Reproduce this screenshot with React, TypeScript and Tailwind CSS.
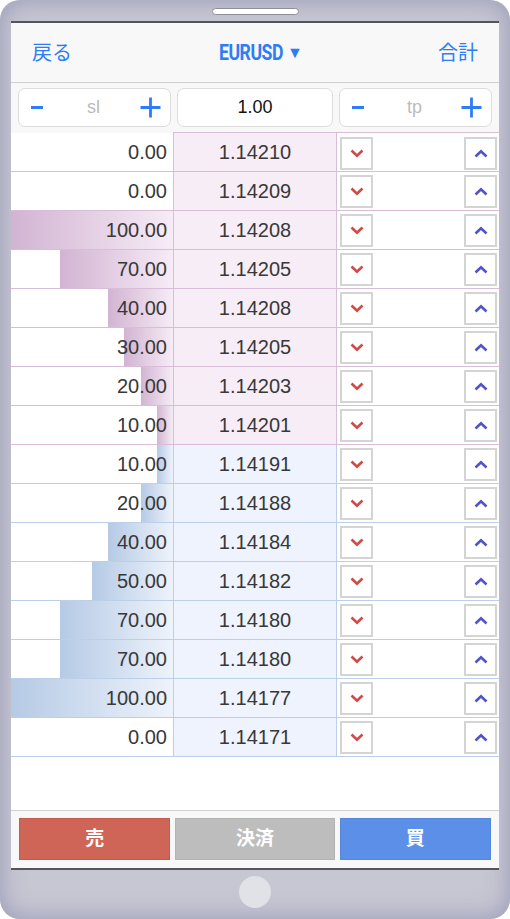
import React from "react";

// Order-book ladder for one currency pair, shown inside a phone frame.

type Row = { vol: number; price: string };

const asks: Row[] = [
  { vol: 0, price: "1.14210" },
  { vol: 0, price: "1.14209" },
  { vol: 100, price: "1.14208" },
  { vol: 70, price: "1.14205" },
  { vol: 40, price: "1.14208" },
  { vol: 30, price: "1.14205" },
  { vol: 20, price: "1.14203" },
  { vol: 10, price: "1.14201" },
];

const bids: Row[] = [
  { vol: 10, price: "1.14191" },
  { vol: 20, price: "1.14188" },
  { vol: 40, price: "1.14184" },
  { vol: 50, price: "1.14182" },
  { vol: 70, price: "1.14180" },
  { vol: 70, price: "1.14180" },
  { vol: 100, price: "1.14177" },
  { vol: 0, price: "1.14171" },
];

const sans = "font-['Liberation_Sans','Noto_Sans_CJK_JP',sans-serif]";

const ChevronDown = () => (
  <svg width="14" height="9" viewBox="0 0 14 9">
    <polyline points="1.5,1.5 7,6.8 12.5,1.5" fill="none" stroke="#d24a48" strokeWidth="2.6" />
  </svg>
);

const ChevronUp = () => (
  <svg width="14" height="9" viewBox="0 0 14 9">
    <polyline points="1.5,7.5 7,2.2 12.5,7.5" fill="none" stroke="#4f54c8" strokeWidth="2.6" />
  </svg>
);

const LadderRow = ({ row, side, first }: { row: Row; side: "ask" | "bid"; first?: boolean }) => {
  const isAsk = side === "ask";
  const line = isAsk ? "border-[#d8bcd8]" : "border-[#bccfe8]";
  return (
    <div className={`flex h-[39px] border-b ${line}`}>
      {/* volume with depth bar */}
      <div className="relative w-[162px] flex items-center justify-end pr-[6px] bg-white">
        {row.vol > 0 && (
          <div
            className={`absolute right-0 top-0 bottom-0 ${
              isAsk
                ? "bg-gradient-to-r from-[#d2b4d2] to-[#f6ecf6]"
                : "bg-gradient-to-r from-[#b5cae5] to-[#eef3fb]"
            }`}
            style={{ width: `${row.vol}%` }}
          />
        )}
        <span className="relative text-[20px] text-[#383838]">{row.vol.toFixed(2)}</span>
      </div>
      {/* price */}
      <div
        className={`w-[164px] flex items-center justify-center border-x ${line} ${first ? "border-t -mt-px" : ""} ${
          isAsk ? "bg-[#f7edf7]" : "bg-[#eef3fd]"
        }`}
      >
        <span className="text-[20px] text-[#383838]">{row.price}</span>
      </div>
      {/* step buttons */}
      <div className={`flex-1 flex items-start justify-between pt-[3px] pl-[3px] pr-[2px] bg-white ${first ? `border-t ${line} -mt-px pt-[4px]` : ""}`}>
        <button className="w-[33px] h-[33px] border-2 border-[#d4d4d4] bg-white flex items-center justify-center">
          <ChevronDown />
        </button>
        <button className="w-[33px] h-[33px] border-2 border-[#d4d4d4] bg-white flex items-center justify-center">
          <ChevronUp />
        </button>
      </div>
    </div>
  );
};

const Stepper = ({ label, width }: { label: string; width: string }) => (
  <div className={`${width} h-[39px] rounded-[7px] border border-[#dcdcdc] bg-white flex items-center justify-between pl-[12px] pr-[9px]`}>
    <span className="w-[12px] h-[3px] bg-[#2e7cf6]" />
    <span className="text-[#bbbbbb] text-[18px] pl-[4px]">{label}</span>
    <svg width="21" height="21" viewBox="0 0 21 21">
      <path d="M10.5 0.5v20M0.5 10.5h20" stroke="#2e7cf6" strokeWidth="2.8" />
    </svg>
  </div>
);

export default function App() {
  return (
    <div
      className={`${sans} w-[510px] h-[919px] rounded-[20px] bg-[#c7c7d3] shadow-[inset_0_0_26px_rgba(150,150,180,0.95)] flex flex-col overflow-hidden`}
    >
      {/* top bezel with speaker */}
      <div className="h-[21px] flex justify-center pt-[8px]">
        <div className="w-[87px] h-[7px] rounded-full bg-white border border-[#8f8f9c]" />
      </div>

      {/* screen */}
      <div className="mx-[11px] border-y-2 border-[#555] bg-white flex flex-col">
        <header className="h-[60px] bg-[#f8f8f8] border-b border-[#cfcfcf] flex items-center justify-between pl-[21px] pr-[21px]">
          <span className="text-[#2e7cf6] text-[20px]">戻る</span>
          <span className="flex items-center text-[#2e7cf6] ml-[4px]">
            <span className="font-['Roboto',sans-serif] font-bold text-[22px] tracking-tight scale-x-80 inline-block">EURUSD</span>
            <span className="text-[16px] -ml-[4px]">▼</span>
          </span>
          <span className="text-[#2e7cf6] text-[20px]">合計</span>
        </header>

        <div className="h-[50px] bg-[#f8f8f8] flex items-start gap-[6px] px-[7px] pt-[5px]">
          <Stepper label="sl" width="w-[153px]" />
          <div className="w-[156px] h-[39px] rounded-[7px] border border-[#dcdcdc] bg-white flex items-center justify-center text-[18px] text-[#111]">
            1.00
          </div>
          <Stepper label="tp" width="w-[153px]" />
        </div>

        <div className="flex flex-col">
          {asks.map((r, i) => (
            <LadderRow key={`a${i}`} row={r} side="ask" first={i === 0} />
          ))}
          {bids.map((r, i) => (
            <LadderRow key={`b${i}`} row={r} side="bid" />
          ))}
        </div>

        <div className="h-[53px] bg-white" />

        <div className="h-[58px] bg-[#f8f8f8] border-t border-[#d0d0d0] flex items-start gap-[5px] pt-[7px] px-[8px]">
          <button className="w-[152px] h-[42px] bg-[#cf6556] border border-[#c35a4c] text-white text-[19px] font-bold">売</button>
          <button className="w-[160px] h-[42px] bg-[#bdbdbd] border border-[#b3b3b3] text-white text-[19px] font-bold">決済</button>
          <button className="w-[152px] h-[42px] bg-[#5b8fe8] border border-[#5587df] text-white text-[19px] font-bold">買</button>
        </div>
      </div>

      {/* bottom bezel with home button */}
      <div className="flex-1 flex justify-center pt-[6px]">
        <div className="w-[32px] h-[32px] rounded-full bg-[#e1e1e8]" />
      </div>
    </div>
  );
}
